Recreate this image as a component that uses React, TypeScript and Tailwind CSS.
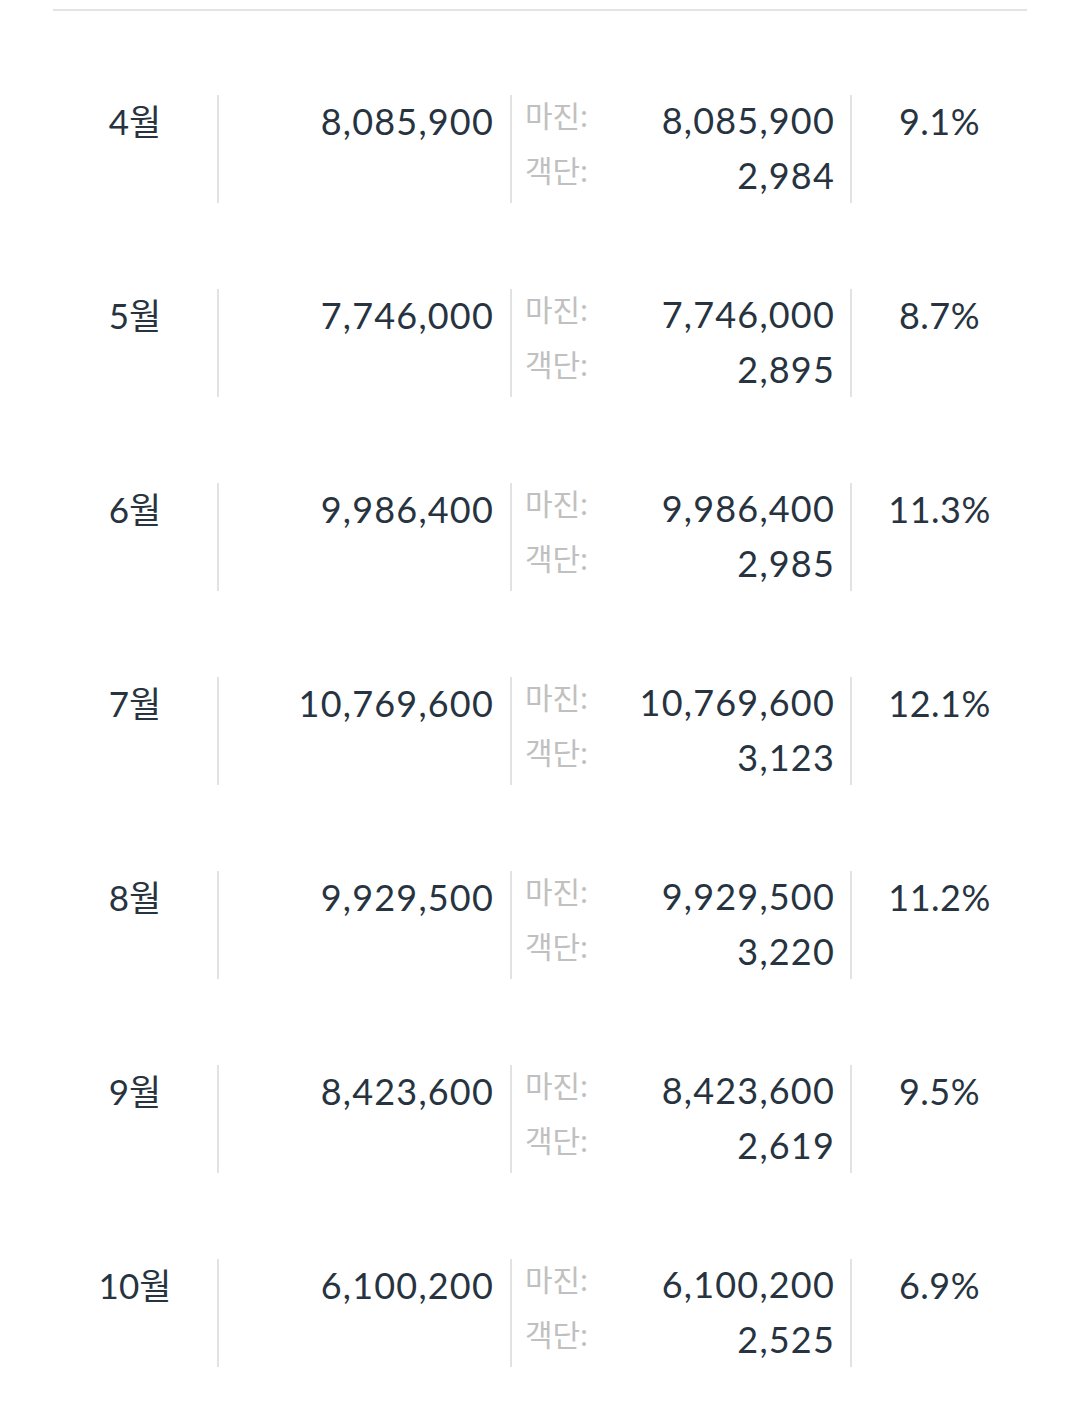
const rows = [
  { month: '4월', sales: '8,085,900', margin: '8,085,900', per: '2,984', rate: '9.1%' },
  { month: '5월', sales: '7,746,000', margin: '7,746,000', per: '2,895', rate: '8.7%' },
  { month: '6월', sales: '9,986,400', margin: '9,986,400', per: '2,985', rate: '11.3%' },
  { month: '7월', sales: '10,769,600', margin: '10,769,600', per: '3,123', rate: '12.1%' },
  { month: '8월', sales: '9,929,500', margin: '9,929,500', per: '3,220', rate: '11.2%' },
  { month: '9월', sales: '8,423,600', margin: '8,423,600', per: '2,619', rate: '9.5%' },
  { month: '10월', sales: '6,100,200', margin: '6,100,200', per: '2,525', rate: '6.9%' },
]

export default function App() {
  return (
    <div
      className="min-h-[1405px] bg-white pt-[9px] text-[#27343f]"
      style={{ fontFamily: 'Lato, "Noto Sans CJK KR", sans-serif' }}
    >
      <div className="mx-[53px] h-[2px] bg-[#e4e4e4]" />
      <div className="mx-[53px] pt-[84px]">
        {rows.map((row) => (
          <div key={row.month} className="mb-[86px] flex h-[108px]">
            {/* month */}
            <div className="w-[164px] text-center text-[35px] leading-[52px]">{row.month}</div>

            {/* sales */}
            <div className="w-[293px] border-l-2 border-[#e2e2e2] pr-[16px] text-right text-[36px] leading-[52px] tracking-[1.2px]">
              {row.sales}
            </div>

            {/* margin / per customer */}
            <div className="flex w-[340px] justify-between border-l-2 border-[#e2e2e2] pl-[13px] pr-[15px]">
              <div className="-mt-[7px] flex flex-col text-[30px] leading-[55px] text-[#c0c0c0]">
                <span>마진:</span>
                <span>객단:</span>
              </div>
              <div className="-mt-[2px] flex flex-col items-end text-[36px] leading-[55px] tracking-[1.2px]">
                <span>{row.margin}</span>
                <span>{row.per}</span>
              </div>
            </div>

            {/* rate */}
            <div className="flex-1 border-l-2 border-[#e2e2e2] text-center text-[36px] leading-[52px] tracking-[0.5px]">
              {row.rate}
            </div>
          </div>
        ))}
      </div>
    </div>
  )
}
